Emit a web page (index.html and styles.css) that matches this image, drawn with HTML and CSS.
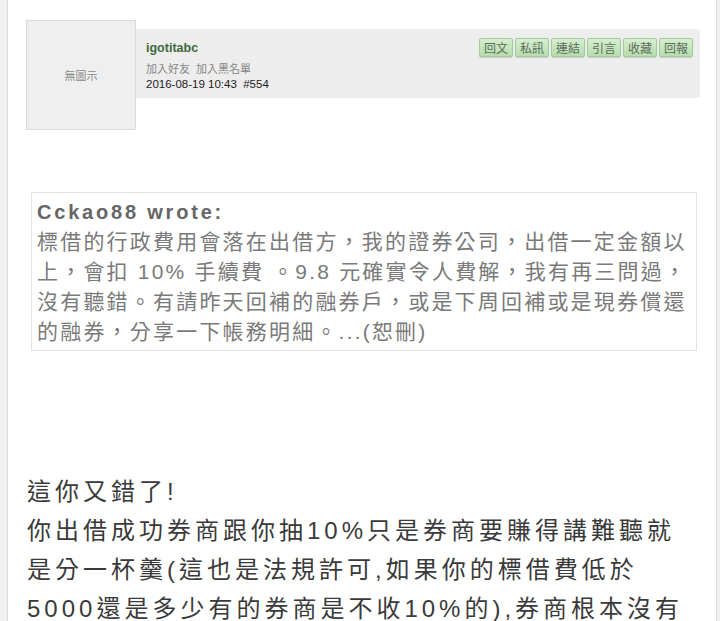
FILE: index.html
```html
<!DOCTYPE html>
<html>
<head>
	<meta charset="utf-8">
	<title>igotitabc #554</title>
	<link rel="stylesheet" href="styles.css">
</head>
<body>
	<div class="page">
		<div class="post">
			<div class="postHead">
				<div class="avatar">無圖示</div>
				<div class="info">
					<div class="who">
						<a class="name">igotitabc</a>
						<p class="links">加入好友&nbsp; 加入黑名單</p>
						<p class="date">2016-08-19 10:43 &nbsp;#554</p>
					</div>
					<div class="tools">
						<button>回文</button><button>私訊</button><button>連結</button><button>引言</button><button>收藏</button><button>回報</button>
					</div>
				</div>
			</div>

			<div class="quote">
				<p class="quoteTitle">Cckao88 wrote:</p>
				<p>標借的行政費用會落在出借方，我的證券公司，出借一定金額以上，會扣 10% 手續費 。9.8 元確實令人費解，我有再三問過，沒有聽錯。有請昨天回補的融券戶，或是下周回補或是現券償還的融券，分享一下帳務明細。...(恕刪)</p>
			</div>

			<div class="body">
				<p>這你又錯了!</p>
				<p>你出借成功券商跟你抽10%只是券商要賺得講難聽就是分一杯羹(這也是法規許可,如果你的標借費低於5000還是多少有的券商是不收10%的),券商根本沒有</p>
			</div>
		</div>
	</div>
</body>
</html>
```

FILE: styles.css
```css
*{
	margin: 0;
	padding: 0;
	box-sizing: border-box;
}

body{
	background-color: #f1f1f1;
	font: normal 12px "Liberation Sans", "Noto Sans CJK TC", sans-serif;
	color: #333;
}

.page{
	margin: 0 3px 0 7px;
	min-height: 621px;
	background-color: #fff;
	border-left: 1px solid #dedede;
	border-right: 1px solid #dedede;
}

.post{
	padding: 20px 16px 0 18px;
}

.postHead{
	display: flex;
	align-items: flex-start;
}

.avatar{
	flex: none;
	width: 110px;
	height: 110px;
	display: flex;
	align-items: center;
	justify-content: center;
	background-color: #efefef;
	border: 1px solid #d9d9d9;
	font-size: 11px;
	color: #888;
}

.info{
	flex: 1;
	display: flex;
	justify-content: space-between;
	margin-top: 9px;
	height: 69px;
	padding: 9px 7px 0 10px;
	background-color: #ededed;
	border-radius: 0 3px 3px 0;
}

.who{
	padding-top: 3px;
	line-height: 15px;
}

.name{
	display: block;
	font-size: 12.5px;
	font-weight: bold;
	color: #3f6b3f;
	margin-bottom: 6px;
}

.links{
	font-size: 11px;
	color: #888;
}

.date{
	font-size: 11.5px;
	color: #222;
}

.tools{
	display: flex;
	gap: 2px;
}

.tools button{
	width: 34px;
	height: 19px;
	padding: 0;
	border: 1px solid #a3cc9b;
	border-radius: 2px;
	background: linear-gradient(#d6eed0, #b6dcae);
	box-shadow: 0 1px 1px rgba(0, 0, 0, 0.15);
	font: normal 12px "Noto Sans CJK TC", sans-serif;
	line-height: 17px;
	color: #5c6e5a;
}

.quote{
	margin: 62px 3px 0 5px;
	padding: 4px 3px 3px 5px;
	border: 1px solid #e2e2e2;
	font-size: 21px;
	line-height: 30px;
	letter-spacing: 2.2px;
	color: #7a7a7a;
}

.quoteTitle{
	font-size: 20px;
	font-weight: bold;
	letter-spacing: 2.8px;
	color: #666;
}

.body{
	margin-top: 121px;
	padding-left: 1px;
	font-size: 24px;
	line-height: 39px;
	letter-spacing: 4px;
	color: #3a3a3a;
}
```
